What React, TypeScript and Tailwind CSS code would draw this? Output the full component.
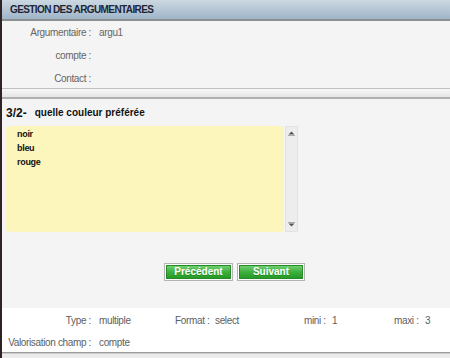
const Row = ({ label, value }: { label: string; value?: string }) => (
  <div className="flex h-[23px] items-center text-[10px] tracking-[-0.35px] text-[#666]">
    <span className="w-[89px] text-right">{label}</span>
    <span className="pl-[8px]">{value}</span>
  </div>
);

const Btn = ({ children, w }: { children: string; w: string }) => (
  <div className={`${w} h-[18px] border border-[#b4b4b4] bg-white p-[1px]`}>
    <div className="h-full border border-[#2a8a2a] bg-gradient-to-b from-[#6fd06f] via-[#3db03d] to-[#259a25] flex items-center justify-center text-[10px] font-bold text-white leading-none [text-shadow:0_1px_0_rgba(0,80,0,0.35)]">
      {children}
    </div>
  </div>
);

export default function App() {
  return (
    <div className="w-[450px] h-[358px] flex bg-[#ececec] overflow-hidden font-['Liberation_Sans',Arial,sans-serif]">
      <div className="w-[2px] bg-[#2e2424] shrink-0" />
      <div className="flex-1 flex flex-col">
        {/* header */}
        <div className="h-[21px] shrink-0 border-b-2 border-[#8c9090] bg-gradient-to-b from-[#cbd8e1] to-[#a1b5c9] pl-[8px] text-[10px] tracking-[-0.6px] font-bold leading-[19px] text-[#1c2535]">
          GESTION DES ARGUMENTAIRES
        </div>

        {/* info */}
        <div className="h-[67px] shrink-0 overflow-hidden bg-[#f4f4f4]">
          <Row label="Argumentaire :" value="argu1" />
          <Row label="compte :" />
          <Row label="Contact :" />
        </div>

        {/* separator band */}
        <div className="h-[11px] shrink-0 border-t border-b-2 border-t-[#c0c0c0] border-b-[#b0b0b0] bg-gradient-to-b from-[#f8f8f8] to-[#e6e6e6]" />

        {/* question */}
        <div className="h-[209px] shrink-0 bg-[#f4f4f4]">
          <div className="h-[27px] flex items-center pl-[4px] font-bold text-[#111]">
            <span className="text-[12px]">3/2-</span>
            <span className="ml-[8px] text-[10px]">quelle couleur préférée</span>
          </div>
          <div className="flex ml-[4px]">
            <div className="w-[278px] h-[106px] rounded-[3px] bg-[#fdf6bc] pl-[11px] pt-[1px] text-[9px] tracking-[-0.3px] font-bold text-[#111]">
              <div className="h-[14px] leading-[14px]">noir</div>
              <div className="h-[14px] leading-[14px]">bleu</div>
              <div className="h-[14px] leading-[14px]">rouge</div>
            </div>
            <div className="ml-[1px] w-[13px] h-[106px] border border-[#e2e2e2] bg-[#ededed] flex flex-col items-center justify-between py-[4px]">
              <svg width="7" height="5" viewBox="0 0 7 5">
                <path d="M3.5 0.5 L6.5 3.5 L0.5 3.5 Z" fill="#555" />
                <rect x="0" y="4" width="7" height="1" fill="#aaa" />
              </svg>
              <svg width="7" height="5" viewBox="0 0 7 5">
                <rect x="0" y="0" width="7" height="1" fill="#aaa" />
                <path d="M0.5 1.5 L6.5 1.5 L3.5 4.5 Z" fill="#555" />
              </svg>
            </div>
          </div>
          <div className="mt-[31px] pl-[162px] flex gap-[4px]">
            <Btn w="w-[69px]">Précédent</Btn>
            <Btn w="w-[68px]">Suivant</Btn>
          </div>
        </div>

        {/* footer */}
        <div className="h-[44px] shrink-0 bg-white pt-[1px] text-[10px] tracking-[-0.35px] text-[#606060]">
          <div className="flex h-[22px] items-center">
            <span className="w-[89px] text-right">Type :</span>
            <span className="w-[84px] pl-[8px]">multiple</span>
            <span className="w-[40px]">Format :</span>
            <span className="w-[89px]">select</span>
            <span className="w-[28px]">mini :</span>
            <span className="w-[62px]">1</span>
            <span className="w-[31px]">maxi :</span>
            <span>3</span>
          </div>
          <div className="flex h-[22px] items-center">
            <span className="w-[89px] text-right">Valorisation champ :</span>
            <span className="pl-[8px]">compte</span>
          </div>
        </div>
        <div className="h-[2px] shrink-0 border-t border-[#9c9c9c] bg-[#cccccc]" />
        <div className="flex-1 bg-[#ececec]" />
      </div>
    </div>
  );
}
